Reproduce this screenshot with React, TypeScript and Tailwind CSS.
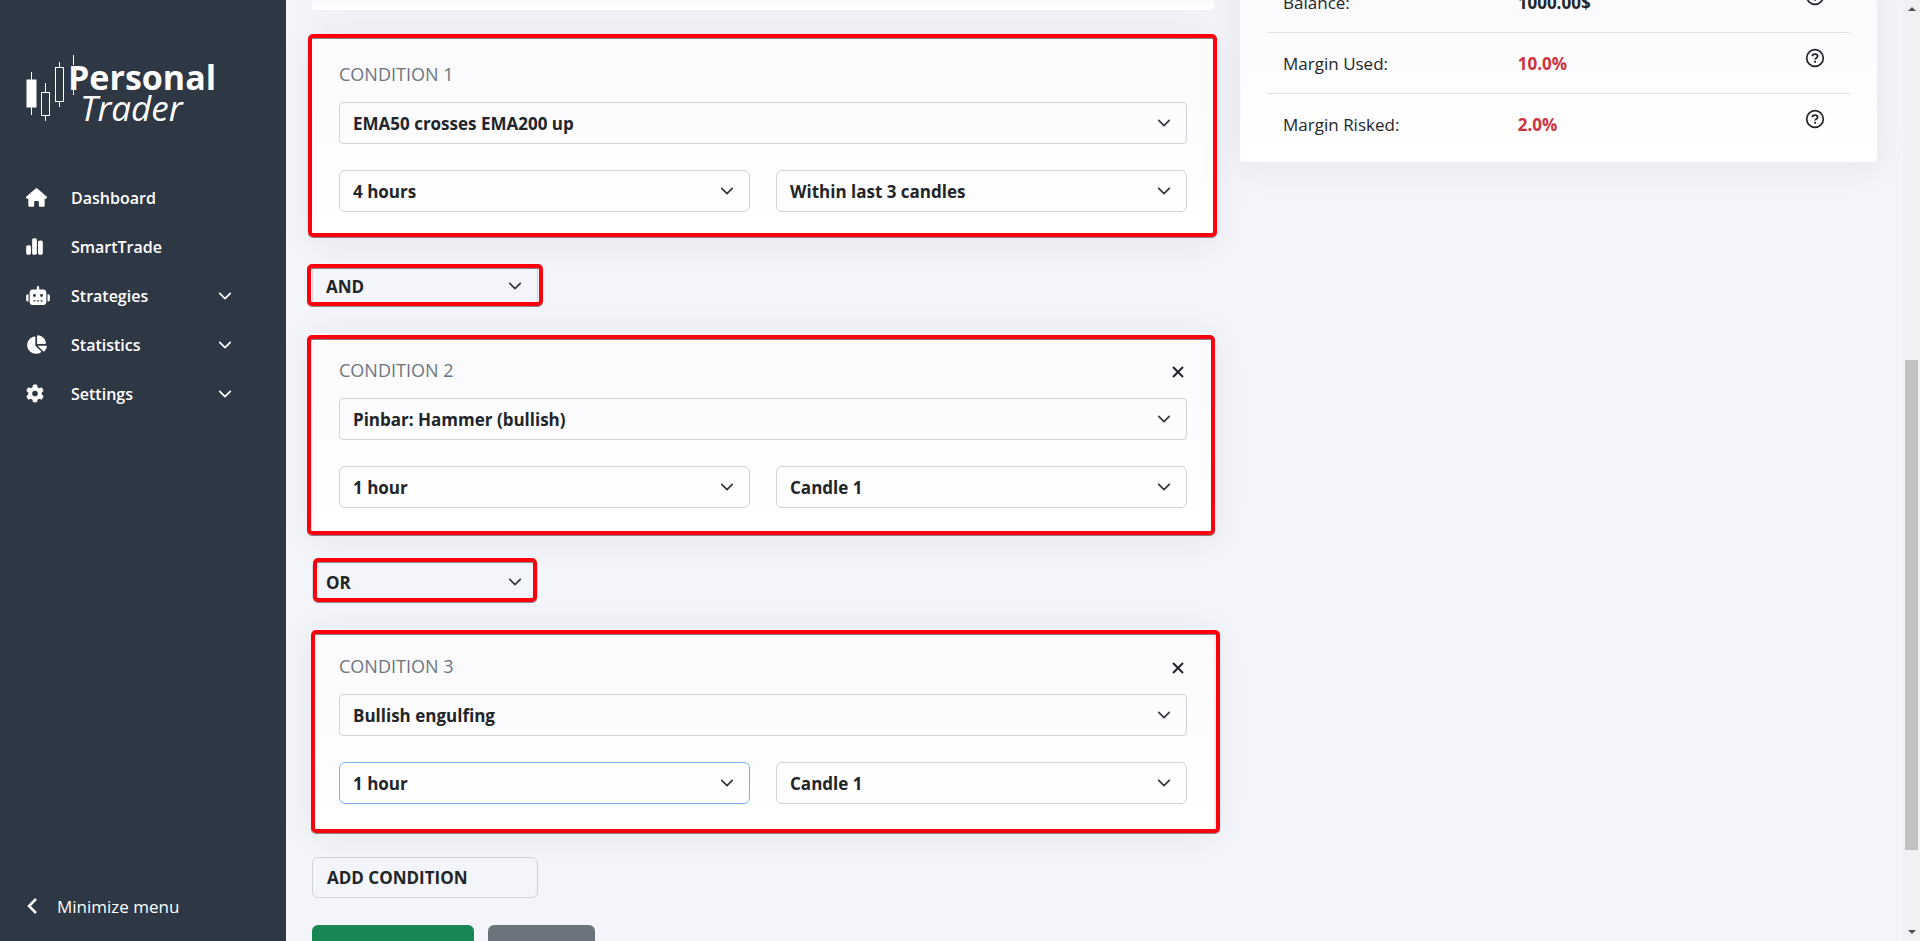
import React, { useState } from "react";
import {
  FaChartPie,
  FaChartSimple,
  FaGear,
  FaHouse,
  FaRobot,
} from "react-icons/fa6";

interface Condition {
  id: number;
  signal: string;
  timeframe: string;
  candle: string;
  frame: string;
  focused?: boolean;
}

const conditions: Condition[] = [
  {
    id: 1,
    signal: "EMA50 crosses EMA200 up",
    timeframe: "4 hours",
    candle: "Within last 3 candles",
    frame: "-left-1 -top-[3px] -right-[3px] bottom-px",
  },
  {
    id: 2,
    signal: "Pinbar: Hammer (bullish)",
    timeframe: "1 hour",
    candle: "Candle 1",
    frame: "-left-[5px] top-[2px] -right-px -bottom-px",
  },
  {
    id: 3,
    signal: "Bullish engulfing",
    timeframe: "1 hour",
    candle: "Candle 1",
    frame: "-left-px top-px -right-[6px] -bottom-[3px]",
    focused: true,
  },
];

const operators = [
  { value: "AND", frame: "-left-[5px] -top-px -right-[5px] bottom-0" },
  { value: "OR", frame: "left-px -top-[3px] right-px bottom-0" },
];

const navItems = [
  { label: "Dashboard", icon: <FaHouse className="w-[21px] h-[19px]" /> },
  { label: "SmartTrade", icon: <FaChartSimple className="w-[17px] h-[19px]" /> },
  { label: "Strategies", icon: <FaRobot className="w-6 h-[19px]" />, open: true },
  { label: "Statistics", icon: <FaChartPie className="w-[21px] h-[19px]" />, open: true },
  { label: "Settings", icon: <FaGear className="w-[18px] h-[19px]" />, open: true },
];

const stats = [
  { label: "Balance:", value: "1000.00$", color: "text-[#212529]" },
  { label: "Margin Used:", value: "10.0%", color: "text-[#cf3341]" },
  { label: "Margin Risked:", value: "2.0%", color: "text-[#cf3341]" },
];

const cardStyle =
  "bg-linear-to-b from-[#fafafd] to-white shadow-[0_4px_36px_rgba(30,20,40,0.07)]";

const Chevron = ({ className }: { className: string }) => (
  <svg viewBox="0 0 16 16" fill="none" className={className} aria-hidden="true">
    <path
      d="m2 5 6 6 6-6"
      stroke="currentColor"
      strokeWidth="2"
      strokeLinecap="round"
      strokeLinejoin="round"
    />
  </svg>
);

const HelpIcon = () => (
  <svg viewBox="0 0 20 20" fill="none" stroke="currentColor" className="size-5" aria-hidden="true">
    <circle cx="10" cy="10" r="8.3" strokeWidth="1.7" />
    <path d="M7.4 8.3C7.4 6.9 8.5 6.1 10 6.1s2.6.8 2.6 2.1c0 1.7-2.5 1.7-2.5 3.4" strokeWidth="1.8" />
    <path d="M10.1 12.8v1.9" strokeWidth="1.9" />
  </svg>
);

const Frame = ({ className }: { className: string }) => (
  <span
    className={`pointer-events-none absolute rounded-[5px] border-4 border-[#fb000d] shadow-[0_1px_0_#8a7f86,inset_0_1px_0_#8a7f86] ${className}`}
  />
);

interface SelectProps {
  label: string;
  options: string[];
  className: string;
}

const Select = ({ label, options, className }: SelectProps) => {
  const [value, setValue] = useState(options[0]);

  return (
    <div className="relative">
      <select
        aria-label={label}
        value={value}
        onChange={(e) => setValue(e.target.value)}
        className={`block w-full appearance-none border bg-transparent pt-[2px] pl-[13px] pr-10 text-[17px] leading-6 font-bold text-[#212529] outline-none ${className}`}
      >
        {options.map((option) => (
          <option key={option}>{option}</option>
        ))}
      </select>
      <Chevron className="pointer-events-none absolute right-4 top-1/2 size-[14px] -translate-y-1/2 text-[#343a40]" />
    </div>
  );
};

const Logo = () => (
  <svg viewBox="0 0 200 72" className="h-[72px] w-[200px]" role="img" aria-label="Personal Trader">
    <g stroke="#fff" fill="none">
      <path d="M5.5 17v8M5.5 52v8M19.5 28v9M19.5 61v5M33.5 7v6M33.5 47v5M47.5 0v10M47.5 33v7" />
      <rect x="1" y="25" width="9" height="27" fill="#fff" />
      <rect x="15.5" y="37.5" width="8" height="23" />
      <rect x="29.5" y="12.5" width="8" height="34" />
    </g>
    <text x="42" y="35" fill="#fff" fontWeight="700" fontSize="34">
      Personal
    </text>
    <text x="54" y="66" fill="#fff" fontStyle="italic" fontSize="35">
      Trader
    </text>
  </svg>
);

const Sidebar = () => (
  <aside className="flex w-[286px] shrink-0 flex-col bg-[#2e3744] px-[26px] text-white">
    <a href="#" className="mt-[55px] block">
      <Logo />
    </a>
    <nav className="mt-[46px] flex flex-col">
      {navItems.map((item) => (
        <a
          key={item.label}
          href="#"
          className="flex h-[49px] items-center pr-7 text-base font-semibold"
        >
          <span className="w-[45px]">{item.icon}</span>
          <span className="flex-1">{item.label}</span>
          {item.open && <Chevron className="size-[14px]" />}
        </a>
      ))}
    </nav>
    <button type="button" className="mt-auto mb-[22px] flex items-center text-[17px]">
      <svg viewBox="0 0 11 16" fill="none" className="mr-5 h-4 w-[11px]" aria-hidden="true">
        <path d="M10 1 3 8l7 7" stroke="currentColor" strokeWidth="2.5" />
      </svg>
      Minimize menu
    </button>
  </aside>
);

const ConditionCard = ({ condition }: { condition: Condition }) => (
  <section className={`relative rounded px-[27px] pt-[26px] pb-[26px] ${cardStyle}`}>
    <div className="mb-[17px] flex h-[22px] items-center justify-between">
      <h2 className="text-lg leading-5 text-[#6c757d]">CONDITION {condition.id}</h2>
      {condition.id > 1 && (
        <button type="button" aria-label="Remove condition" className="mr-[3px] pt-1">
          <svg viewBox="0 0 12 12" className="size-3" stroke="#212529" strokeWidth="2">
            <path d="M1 1l10 10M11 1L1 11" />
          </svg>
        </button>
      )}
    </div>
    <Select
      label="Signal"
      options={[condition.signal]}
      className="h-[42px] rounded border-[#ced4da]"
    />
    <div className="mt-[26px] grid grid-cols-2 gap-[26px]">
      <Select
        label="Timeframe"
        options={[condition.timeframe]}
        className={`h-[42px] rounded-md ${
          condition.focused ? "border-[#73b2ee]" : "border-[#ced4da]"
        }`}
      />
      <Select
        label="Candle"
        options={[condition.candle]}
        className="h-[42px] rounded-md border-[#ced4da]"
      />
    </div>
    <Frame className={condition.frame} />
  </section>
);

const Summary = () => (
  <section className={`-mt-[29px] rounded px-[27px] pb-2 ${cardStyle}`}>
    <table className="w-full text-[17px] text-[#212529]">
      <tbody>
        {stats.map((stat) => (
          <tr key={stat.label} className="h-[61px] border-b border-[#e5e2d9] last:border-0">
            <th scope="row" className="w-[43%] pt-[2px] pl-4 text-left font-normal">
              {stat.label}
            </th>
            <td className={`pt-[2px] font-bold ${stat.color}`}>{stat.value}</td>
            <td className="w-[45px]">
              <button type="button" aria-label={`Help for ${stat.label}`} className="block pb-[10px]">
                <HelpIcon />
              </button>
            </td>
          </tr>
        ))}
      </tbody>
    </table>
  </section>
);

const Scrollbar = () => (
  <div className="flex w-[17px] shrink-0 flex-col items-center bg-[#f1f1f3] py-[7px]">
    <span className="border-x-4 border-b-4 border-x-transparent border-b-[#505050]" />
    <span className="mt-[349px] h-[490px] w-[13px] bg-[#c1c1c1]" />
    <span className="mt-auto border-x-4 border-t-4 border-x-transparent border-t-[#505050]" />
  </div>
);

const App: React.FC = () => {
  return (
    <div className="flex h-screen overflow-hidden bg-[#f4f5fa] font-['Open_Sans','Noto_Sans',sans-serif]">
      <Sidebar />
      <main className="grid flex-1 grid-cols-12 items-start gap-x-[26px] overflow-hidden px-[26px]">
        <div className="col-span-7 flex flex-col gap-[27px]">
          <div className={`h-[10px] rounded-b ${cardStyle}`} />
          {conditions.map((condition, i) => (
            <React.Fragment key={condition.id}>
              <ConditionCard condition={condition} />
              {operators[i] && (
                <div className="relative w-[226px]">
                  <Select
                    label="Operator"
                    options={[operators[i].value]}
                    className="h-[41px] rounded-md border-[#ced4da]"
                  />
                  <Frame className={operators[i].frame} />
                </div>
              )}
            </React.Fragment>
          ))}
          <button
            type="button"
            className="h-[41px] w-[226px] rounded-md border border-[#ced4da] pl-[14px] text-left text-[17px] font-bold text-[#212529]"
          >
            ADD CONDITION
          </button>
          <div className="flex gap-[14px]">
            <button type="button" aria-label="Save" className="h-[41px] w-[162px] rounded-md bg-[#198754]" />
            <button type="button" aria-label="Cancel" className="h-[41px] w-[107px] rounded-md bg-[#6c757d]" />
          </div>
        </div>
        <div className="col-span-5">
          <Summary />
        </div>
      </main>
      <Scrollbar />
    </div>
  );
};

export default App;
